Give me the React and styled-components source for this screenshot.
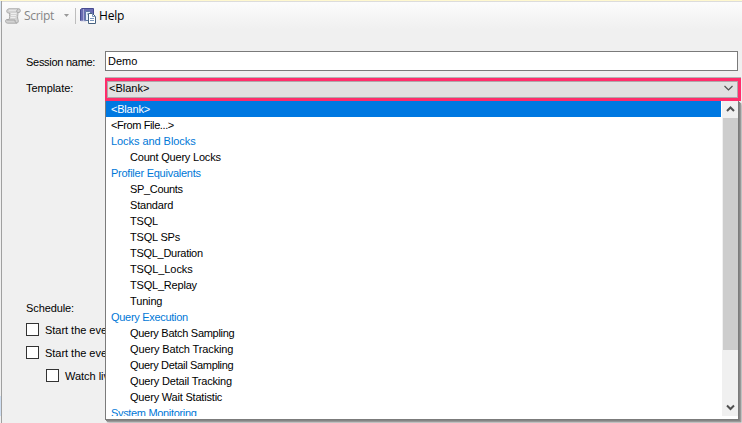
import React from "react";
import styled, { createGlobalStyle } from "styled-components";

const GlobalStyle = createGlobalStyle`
  * { box-sizing: border-box; }
  body { margin: 0; background: #f0f0f0; overflow: hidden; }
`;

const Window = styled.div`
  display: grid;
  grid-template-columns: 2px 1fr;
  width: 742px;
  height: 423px;
  overflow: hidden;
  border-top: 1px solid #fff8cf;
  background: #f0f0f0;
  color: #000;
  font: 11px/16px "Liberation Sans", Arial, sans-serif;
  white-space: nowrap;
`;

const Edge = styled.div`
  display: flex;
  flex-direction: column;
  justify-content: space-between;
  background: #f0f0f0;
  border-right: 1px solid #a0a0a0;
  &::before { content: ""; height: 21px; background: #d9e5f3; }
  &::after { content: ""; height: 20px; margin-bottom: 7px; background: #cfdff3; }
`;

const Page = styled.main`
  display: flex;
  flex-direction: column;
  min-width: 0;
  border-top: 1px solid #dcdcdc;
`;

const Toolbar = styled.header`
  display: flex;
  align-items: center;
  height: 27px;
  padding-left: 3px;
  background: linear-gradient(#fcfcfc, #f0f0f0);
`;

const ToolLabel = styled.span`
  width: ${(p) => p.$width}px;
  margin-left: 3px;
  color: ${(p) => (p.$disabled ? "#858585" : "#000")};
  font: 12px/16px "Open Sans", sans-serif;
  letter-spacing: ${(p) => p.$track || 0}px;
`;

const Separator = styled.i`
  width: 1px;
  height: 16px;
  margin: 0 4px 0 6px;
  background: #bdbdbd;
`;

const Form = styled.section`
  display: flex;
  flex-direction: column;
  padding: 22px 1px 0 24px;
`;

const Field = styled.div`
  display: grid;
  grid-template-columns: 79px 1fr;
  align-items: start;
  height: ${(p) => p.$height}px;
`;

const Label = styled.label`
  padding-top: 3px;
  letter-spacing: ${(p) => p.$track || 0}px;
`;

const TextBox = styled.div`
  height: 20px;
  margin-right: 3px;
  padding: 1px 0 0 2px;
  border: 1px solid #7a7a7a;
  background: #fff;
`;

const Combo = styled.div`
  position: relative;
  height: 24px;
  border-top: 1px solid #b4b4b4;
`;

const ComboBox = styled.div`
  display: flex;
  justify-content: space-between;
  height: 23px;
  padding: 0 5px 0 2px;
  border: 3px solid #ff2d6b;
  border-left-width: 2px;
  box-shadow: inset 0 0 0 1px #b0a6aa;
  background: #e1e1e1;
  line-height: 14px;
  svg { margin-top: 4px; }
`;

const Popup = styled.div`
  position: absolute;
  top: 23px;
  left: 0;
  display: grid;
  grid-template-columns: 1fr 16px;
  width: 634px;
  height: 319px;
  padding-bottom: 3px;
  border: 1px solid #7b7b7b;
  border-top: 0;
  background: #fff;
  box-shadow: 1px 1px 0 #858585, 2px 2px 1px #999, 3px 3px 2px #b8b8b8;
`;

const List = styled.div`
  height: 315px;
  margin-right: 1px;
  overflow: hidden;
`;

const Item = styled.div`
  height: 16px;
  padding-left: ${(p) => (p.$kind === "child" ? 24 : 5)}px;
  color: ${(p) => (p.$selected ? "#fff" : p.$kind === "group" ? "#0078d7" : "#000")};
  background: ${(p) => (p.$selected ? "#0078e1" : "transparent")};
  letter-spacing: ${(p) => p.$track || 0}px;
`;

const Scrollbar = styled.div`
  display: flex;
  flex-direction: column;
  align-items: center;
  height: 315px;
  background: #f0f0f0;
`;

const ScrollButton = styled.div`
  display: grid;
  place-items: center;
  height: 17px;
`;

const Thumb = styled.div`
  width: 15px;
  height: 232px;
  margin-bottom: 49px;
  background: #cdcdcd;
`;

const CheckRow = styled.div`
  display: flex;
  align-items: center;
  gap: 6px;
  height: 23px;
  width: 80px;
  overflow: hidden;
  padding-left: ${(p) => (p.$nested ? 20 : 0)}px;
  letter-spacing: -0.03px;
`;

const CheckBox = styled.i`
  flex: none;
  width: 13px;
  height: 13px;
  border: 1px solid #333;
  background: #fff;
`;

const Schedule = styled.div`
  padding-top: 199px;
`;

const ScheduleTitle = styled.div`
  height: 18px;
  letter-spacing: -0.1px;
`;

const ScriptIcon = () => (
  <svg width="16" height="16" viewBox="0 0 16 16">
    <path d="M4 .8h10c1.800 0 1.800 3.700 0 3.700h-1c0 3-1 5 0 7 .7 2 0 3.700-1.500 3.700H2.500C0 15.200 0 11.500 2 11.500h2c1-2 .5-4 .5-6.500H3C1 4.500 1.500.8 4 .8Z" fill="#d3d3d3" stroke="#aaa" />
    <path d="M4 2.200h8M6 5.500h5.500M6 7.500h5M5.500 9.500h5" stroke="#eee" fill="none" />
    <path d="M13 4.500c-2 0-1.500-3 0-3M2 12h8c0 2 .5 3 2 3" stroke="#a5a5a5" fill="none" />
  </svg>
);

const HelpIcon = () => (
  <svg width="16" height="16" viewBox="0 0 16 16">
    <path d="M.5 1.500 2 .5h11.500v12H.5Z" fill="#6a6db2" stroke="#484b91" />
    <path d="M3.500 1v12" stroke="#a9abd3" />
    <path d="M1 13h5" stroke="#c9cce5" />
    <path d="M5.500 3.500h4l2 2v7h-6Z" fill="#e6effa" stroke="#607ba6" />
    <path d="M8.500 5.500h4l3 3v7h-7Z" fill="#fff" stroke="#46617f" />
    <path d="M12.500 5.500v3h3M10 10.500h4M10 12.500h4M7 6h1" stroke="#7c98be" fill="none" />
  </svg>
);

const Chevron = ({ up, thin }) => (
  <svg width="9" height="7" viewBox="0 0 9 7">
    <path
      d={up ? "M1 5 4.500 1.500 8 5" : thin ? "M.5 1 4.500 5 8.500 1" : "M1 1.500 4.500 5 8 1.500"}
      fill="none"
      stroke="#505050"
      strokeWidth={thin ? 1.2 : 2}
    />
  </svg>
);

const DropArrow = () => (
  <svg width="5" height="3" viewBox="0 0 5 3">
    <path d="M0 0h5L2.500 3Z" fill="#999" />
  </svg>
);

const items = [
  ["top", "<Blank>", -0.2],
  ["top", "<From File...>", -0.4],
  ["group", "Locks and Blocks", -0.06],
  ["child", "Count Query Locks", -0.2],
  ["group", "Profiler Equivalents", -0.25],
  ["child", "SP_Counts", -0.33],
  ["child", "Standard", -0.2],
  ["child", "TSQL", -0.2],
  ["child", "TSQL SPs", -0.2],
  ["child", "TSQL_Duration", -0.28],
  ["child", "TSQL_Locks", -0.1],
  ["child", "TSQL_Replay", -0.2],
  ["child", "Tuning", -0.15],
  ["group", "Query Execution", -0.3],
  ["child", "Query Batch Sampling", -0.28],
  ["child", "Query Batch Tracking", -0.12],
  ["child", "Query Detail Sampling", -0.32],
  ["child", "Query Detail Tracking", -0.18],
  ["child", "Query Wait Statistic", -0.2],
  ["group", "System Monitoring", -0.33],
];

export default function App() {
  return (
    <>
      <GlobalStyle />
      <Window>
        <Edge />
        <Page>
          <Toolbar>
            <ScriptIcon />
            <ToolLabel $disabled $width={40} $track={-0.3}>Script</ToolLabel>
            <DropArrow />
            <Separator />
            <HelpIcon />
            <ToolLabel $width={30} $track={-0.2}>Help</ToolLabel>
          </Toolbar>
          <Form>
            <Field $height={26}>
              <Label $track={-0.28}>Session name:</Label>
              <TextBox>Demo</TextBox>
            </Field>
            <Field $height={24}>
              <Label $track={-0.05}>Template:</Label>
              <Combo>
                <ComboBox>
                  <span>&lt;Blank&gt;</span>
                  <Chevron thin />
                </ComboBox>
                <Popup>
                  <List>
                    {items.map(([kind, text, track], i) => (
                      <Item key={text} $kind={kind} $track={track} $selected={i === 0}>{text}</Item>
                    ))}
                  </List>
                  <Scrollbar>
                    <ScrollButton><Chevron up /></ScrollButton>
                    <Thumb />
                    <ScrollButton><Chevron /></ScrollButton>
                  </Scrollbar>
                </Popup>
              </Combo>
            </Field>
            <Schedule>
              <ScheduleTitle>Schedule:</ScheduleTitle>
              <CheckRow><CheckBox />Start the eve</CheckRow>
              <CheckRow><CheckBox />Start the eve</CheckRow>
              <CheckRow $nested><CheckBox />Watch liv</CheckRow>
            </Schedule>
          </Form>
        </Page>
      </Window>
    </>
  );
}
